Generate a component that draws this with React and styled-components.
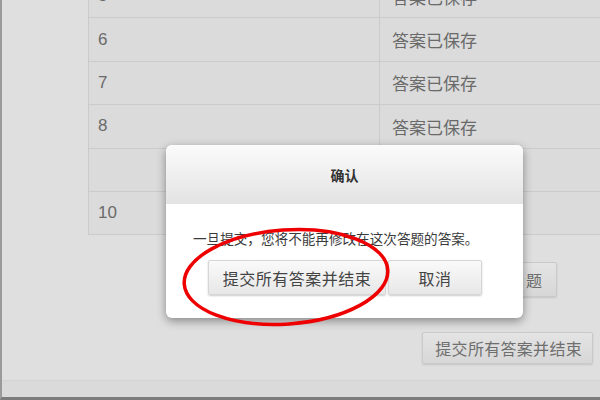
import React from 'react';
import styled, { createGlobalStyle } from 'styled-components';

const GlobalStyle = createGlobalStyle`
  body {
    margin: 0;
    background: #dfdfdf;
    font-family: "Liberation Sans", "Noto Sans CJK SC", sans-serif;
    overflow: hidden;
  }
`;

const Screen = styled.div`
  position: relative;
  width: 600px;
  height: 400px;
  box-sizing: border-box;
  border-left: 2px solid #9a9a9a;
  border-bottom: 3px solid #7c7c7c;
  background: #dfdfdf;
  overflow: hidden;
  display: flex;
  flex-direction: column;
`;

const Content = styled.div`
  flex: 1;
  padding-left: 86px;
  display: flex;
  flex-direction: column;
`;

const Table = styled.div`
  margin-top: -26px;
  width: 560px;
  border-left: 1px solid #cbcbcb;
  border-bottom: 1px solid #cbcbcb;
  background: #dbdbdb;
`;

const Row = styled.div`
  display: grid;
  grid-template-columns: 290px 1fr;
  height: 42.4px;
  border-top: 1px solid #cbcbcb;
`;

const Cell = styled.div`
  display: flex;
  align-items: center;
  padding-left: ${(p) => (p.$second ? '12px' : '9px')};
  border-left: ${(p) => (p.$second ? '1px solid #cbcbcb' : 'none')};
  font-size: 17px;
  color: #6a6a6a;
`;

const Actions = styled.div`
  display: flex;
  flex-direction: column;
  align-items: flex-end;
`;

const PageButton = styled.div`
  box-sizing: border-box;
  height: ${(p) => p.$h}px;
  margin-top: ${(p) => p.$top}px;
  margin-right: ${(p) => p.$right}px;
  padding: ${(p) => p.$pad};
  display: flex;
  align-items: center;
  font-size: 16px;
  letter-spacing: ${(p) => p.$spacing}px;
  color: #6e6e6e;
  background: linear-gradient(#e4e4e4, #d7d7d7);
  border: 1px solid #cacaca;
  border-radius: 2px;
  box-shadow: 0 1px 2px rgba(0, 0, 0, 0.12);
`;

const Footer = styled.div`
  height: 16px;
  background: #dadada;
  border-top: 1px solid #d4d4d4;
`;

const Modal = styled.div`
  position: absolute;
  left: 164px;
  top: 145px;
  width: 357px;
  height: 173px;
  background: #fff;
  border-radius: 6px;
  box-shadow: 0 3px 10px rgba(0, 0, 0, 0.4);
  overflow: hidden;
  display: flex;
  flex-direction: column;
`;

const ModalHeader = styled.div`
  height: 59px;
  display: flex;
  align-items: center;
  justify-content: center;
  background: linear-gradient(#fbfbfb, #e3e3e3);
  font-size: 14px;
  font-weight: bold;
  color: #333;
`;

const ModalBody = styled.div`
  padding: 26px 0 0 27px;
`;

const Message = styled.div`
  font-size: 13.6px;
  line-height: 20px;
  color: #3a3a3a;
`;

const ButtonRow = styled.div`
  display: flex;
  gap: 2px;
  margin: 10px 0 0 15px;
`;

const DialogButton = styled.div`
  box-sizing: border-box;
  width: ${(p) => p.$w}px;
  height: 35px;
  display: flex;
  align-items: center;
  justify-content: center;
  font-size: 16px;
  letter-spacing: 0.5px;
  color: #444;
  background: linear-gradient(#fafafa, #e7e7e7);
  border: 1px solid #d6d6d6;
  border-radius: 2px;
  box-shadow: 0 1px 2px rgba(0, 0, 0, 0.2);
`;

const Mark = styled.svg`
  position: absolute;
  left: 176px;
  top: 222px;
  pointer-events: none;
`;

const rows = [
  ['5', '答案已保存'],
  ['6', '答案已保存'],
  ['7', '答案已保存'],
  ['8', '答案已保存'],
  ['', ''],
  ['10', ''],
];

export default function App() {
  return (
    <Screen>
      <GlobalStyle />
      <Content>
        <Table>
          {rows.map(([n, status], i) => (
            <Row key={i}>
              <Cell>{n}</Cell>
              <Cell $second>{status}</Cell>
            </Row>
          ))}
        </Table>
        <Actions>
          <PageButton $h={35} $top={27} $right={43} $pad="0 8px 0 14px" $spacing={6}>
            下一题
          </PageButton>
          <PageButton $h={32} $top={35} $right={7} $pad="0 10px 0 12px" $spacing={0.3}>
            提交所有答案并结束
          </PageButton>
        </Actions>
      </Content>
      <Footer />

      <Modal>
        <ModalHeader>确认</ModalHeader>
        <ModalBody>
          <Message>一旦提交，您将不能再修改在这次答题的答案。</Message>
          <ButtonRow>
            <DialogButton $w={178}>提交所有答案并结束</DialogButton>
            <DialogButton $w={94}>取消</DialogButton>
          </ButtonRow>
        </ModalBody>
      </Modal>

      <Mark width="220" height="112" viewBox="0 0 220 112">
        <ellipse
          cx="108"
          cy="55"
          rx="102"
          ry="47"
          fill="none"
          stroke="#ee0000"
          strokeWidth="3.5"
          transform="rotate(-4 108 55)"
        />
      </Mark>
    </Screen>
  );
}
